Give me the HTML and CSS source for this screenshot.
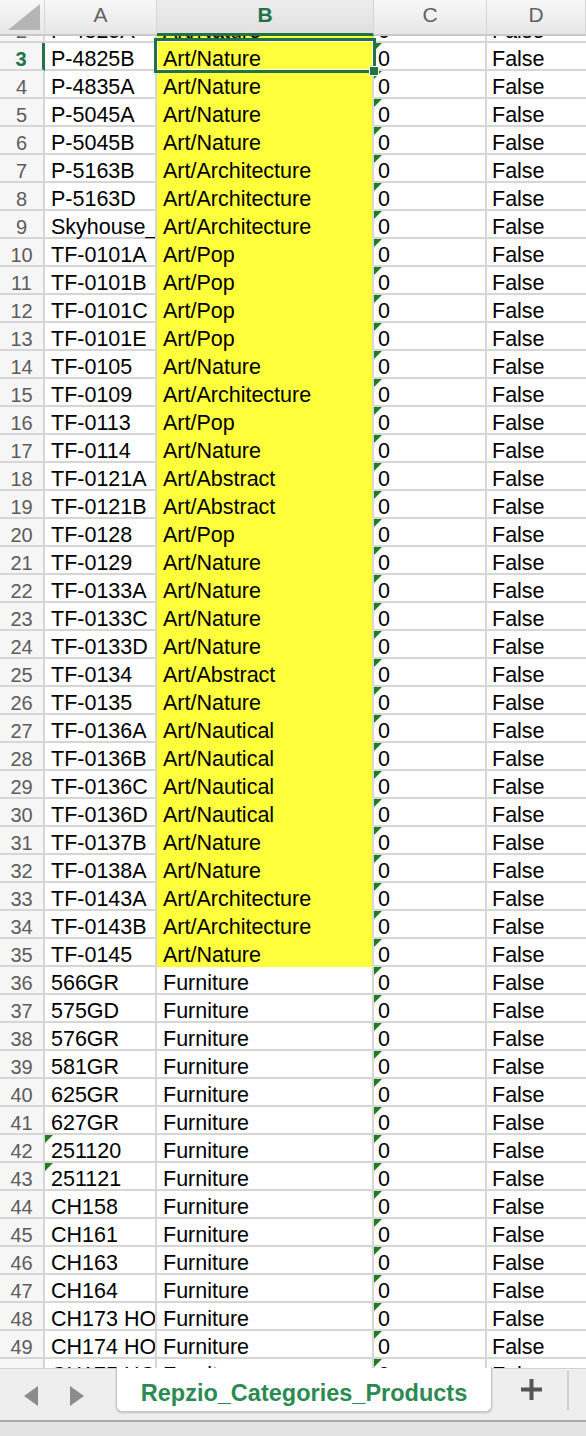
FILE: index.html
```html
<!DOCTYPE html>
<html lang="en">
<head>
    <meta charset="UTF-8">
    <meta name="viewport" content="width=device-width, initial-scale=1.0">
    <title>Repzio_Categories_Products</title>
    <link rel="stylesheet" href="styles.css">
</head>
<body>
    <div class="sheet">
        <div class="col-heads">
            <div class="corner">
                <svg width="44" height="34" viewBox="0 0 44 34"><polygon points="40,4 40,30 8,30" fill="#b5b5b5"/></svg>
            </div>
            <div class="head">A</div>
            <div class="head current">B</div>
            <div class="head">C</div>
            <div class="head">D</div>
        </div>
        <div class="viewport">
            <div id="rows" class="rows"></div>
        </div>
        <!-- active cell B3 -->
        <div class="selection"><span class="handle"></span></div>
    </div>

    <div class="tabbar">
        <div class="nav">
            <svg width="14" height="20" viewBox="0 0 14 20"><polygon points="0,10 14,0 14,20" fill="#8c8c8c"/></svg>
            <svg width="14" height="20" viewBox="0 0 14 20"><polygon points="14,10 0,0 0,20" fill="#8c8c8c"/></svg>
        </div>
        <div class="tab">Repzio_Categories_Products</div>
        <div class="add">
            <svg width="21" height="21" viewBox="0 0 21 21"><rect x="8.5" y="0" width="4" height="21" fill="#555"/><rect x="0" y="8.5" width="21" height="4" fill="#555"/></svg>
        </div>
        <div class="rest"></div>
    </div>
    <div class="status"></div>

    <script>
        // [sku, category, sku stored as text]
        const rows = [
            ["P-4825A", "Art/Nature"],
            ["P-4825B", "Art/Nature"],
            ["P-4835A", "Art/Nature"],
            ["P-5045A", "Art/Nature"],
            ["P-5045B", "Art/Nature"],
            ["P-5163B", "Art/Architecture"],
            ["P-5163D", "Art/Architecture"],
            ["Skyhouse_Collection", "Art/Architecture"],
            ["TF-0101A", "Art/Pop"],
            ["TF-0101B", "Art/Pop"],
            ["TF-0101C", "Art/Pop"],
            ["TF-0101E", "Art/Pop"],
            ["TF-0105", "Art/Nature"],
            ["TF-0109", "Art/Architecture"],
            ["TF-0113", "Art/Pop"],
            ["TF-0114", "Art/Nature"],
            ["TF-0121A", "Art/Abstract"],
            ["TF-0121B", "Art/Abstract"],
            ["TF-0128", "Art/Pop"],
            ["TF-0129", "Art/Nature"],
            ["TF-0133A", "Art/Nature"],
            ["TF-0133C", "Art/Nature"],
            ["TF-0133D", "Art/Nature"],
            ["TF-0134", "Art/Abstract"],
            ["TF-0135", "Art/Nature"],
            ["TF-0136A", "Art/Nautical"],
            ["TF-0136B", "Art/Nautical"],
            ["TF-0136C", "Art/Nautical"],
            ["TF-0136D", "Art/Nautical"],
            ["TF-0137B", "Art/Nature"],
            ["TF-0138A", "Art/Nature"],
            ["TF-0143A", "Art/Architecture"],
            ["TF-0143B", "Art/Architecture"],
            ["TF-0145", "Art/Nature"],
            ["566GR", "Furniture"],
            ["575GD", "Furniture"],
            ["576GR", "Furniture"],
            ["581GR", "Furniture"],
            ["625GR", "Furniture"],
            ["627GR", "Furniture"],
            ["251120", "Furniture", true],
            ["251121", "Furniture", true],
            ["CH158", "Furniture"],
            ["CH161", "Furniture"],
            ["CH163", "Furniture"],
            ["CH164", "Furniture"],
            ["CH173 HOME", "Furniture"],
            ["CH174 HOME", "Furniture"],
            ["CH175 HOME", "Furniture"]
        ];

        let html = "";
        rows.forEach((r, i) => {
            const n = i + 2;
            html += `
                <div class="row${n === 3 ? " active" : ""}">
                    <div class="num">${n}</div>
                    <div class="cell${r[2] ? " flag" : ""}">${r[0]}</div>
                    <div class="cell${n <= 35 ? " fill" : ""}">${r[1]}</div>
                    <div class="cell flag">0</div>
                    <div class="cell">False</div>
                </div>`;
        });
        document.getElementById("rows").innerHTML = html;
    </script>
</body>
</html>
```

FILE: styles.css
```css
body {
    margin: 0;
    width: 586px;
    height: 1436px;
    overflow: hidden;
    background: #fff;
    font-family: "Liberation Sans", Arial, sans-serif;
}
.sheet {
    position: relative;
    height: 1368px;
    overflow: hidden;
}
.col-heads, .row {
    display: grid;
    grid-template-columns: 45px 112px 217px 113px 1fr;
}
.col-heads {
    height: 36px;
    box-sizing: border-box;
    border-bottom: 2px solid #c9c9c9;
    background: linear-gradient(#f8f8f8, #e7e7e7);
}
.corner {
    border-right: 1px solid #d6d6d6;
}
.corner svg {
    display: block;
}
.head {
    border-right: 1px solid #d6d6d6;
    text-align: center;
    font-size: 21px;
    line-height: 30px;
    color: #626262;
}
.head.current {
    color: #217346;
    font-weight: bold;
    border-bottom: 4px solid #217346;
    margin-bottom: -3px;
    background: linear-gradient(#ededed, #e0e0e0);
}
.viewport {
    height: 1332px;
    overflow: hidden;
}
.rows {
    margin-top: -21px;
}
.row {
    height: 28px;
}
.num, .cell {
    box-sizing: border-box;
    border-right: 2px solid #d6d6d6;
    border-bottom: 2px solid #d6d6d6;
    white-space: nowrap;
    overflow-x: clip;
    overflow-y: visible;
    line-height: 32px;
    height: 28px;
}
.num {
    background: #f6f6f6;
    text-align: center;
    font-size: 20px;
    color: #5c5c5c;
}
.row.active .num {
    color: #217346;
    font-weight: bold;
    border-right: 3px solid #217346;
}
.cell {
    position: relative;
    padding-left: 6px;
    font-size: 21.5px;
    color: #000;
}
.cell:nth-child(4) {
    padding-left: 4px;
}
.cell:nth-child(5) {
    padding-left: 5px;
    border-right: none;
}
.cell.fill {
    background: #ffff3b;
    border-bottom-color: #ffff3b;
}
/* number stored as text marker */
.cell.flag::before {
    content: "";
    position: absolute;
    left: 0;
    top: 0;
    border-top: 8px solid #1f7d1f;
    border-right: 8px solid transparent;
}
.selection {
    position: absolute;
    left: 154px;
    top: 38px;
    width: 222px;
    height: 35px;
    box-sizing: border-box;
    border: 3px solid #217346;
    box-shadow: inset 0 0 0 1px #fff;
}
.handle {
    position: absolute;
    right: -6px;
    bottom: -6px;
    width: 8px;
    height: 8px;
    background: #217346;
    border: 1px solid #fff;
}
.tabbar {
    display: flex;
    height: 52px;
    box-sizing: border-box;
    border-top: 1px solid #d2d2d2;
    background: #eeeeee;
}
.nav {
    width: 116px;
    display: flex;
    align-items: center;
    gap: 32px;
    padding: 2px 0 0 24px;
    box-sizing: border-box;
}
.tab {
    width: 376px;
    height: 45px;
    margin-top: -2px;
    box-sizing: border-box;
    background: #fff;
    border: 1px solid #c4c4c4;
    border-top: none;
    border-radius: 0 0 6px 6px;
    box-shadow: 0 1px 2px rgba(0, 0, 0, 0.2);
    text-align: center;
    font-size: 23.5px;
    font-weight: bold;
    line-height: 53px;
    color: #2b8a52;
}
.add {
    width: 77px;
    display: flex;
    align-items: center;
    justify-content: center;
    padding: 0 0 2px 4px;
    box-sizing: border-box;
    border-right: 2px solid #cfcfcf;
    margin: 2px 0 10px;
}
.rest {
    flex: 1;
}
.status {
    height: 16px;
    box-sizing: border-box;
    border-top: 2px solid #a9a9a9;
    background: #e3e3e3;
}
```
